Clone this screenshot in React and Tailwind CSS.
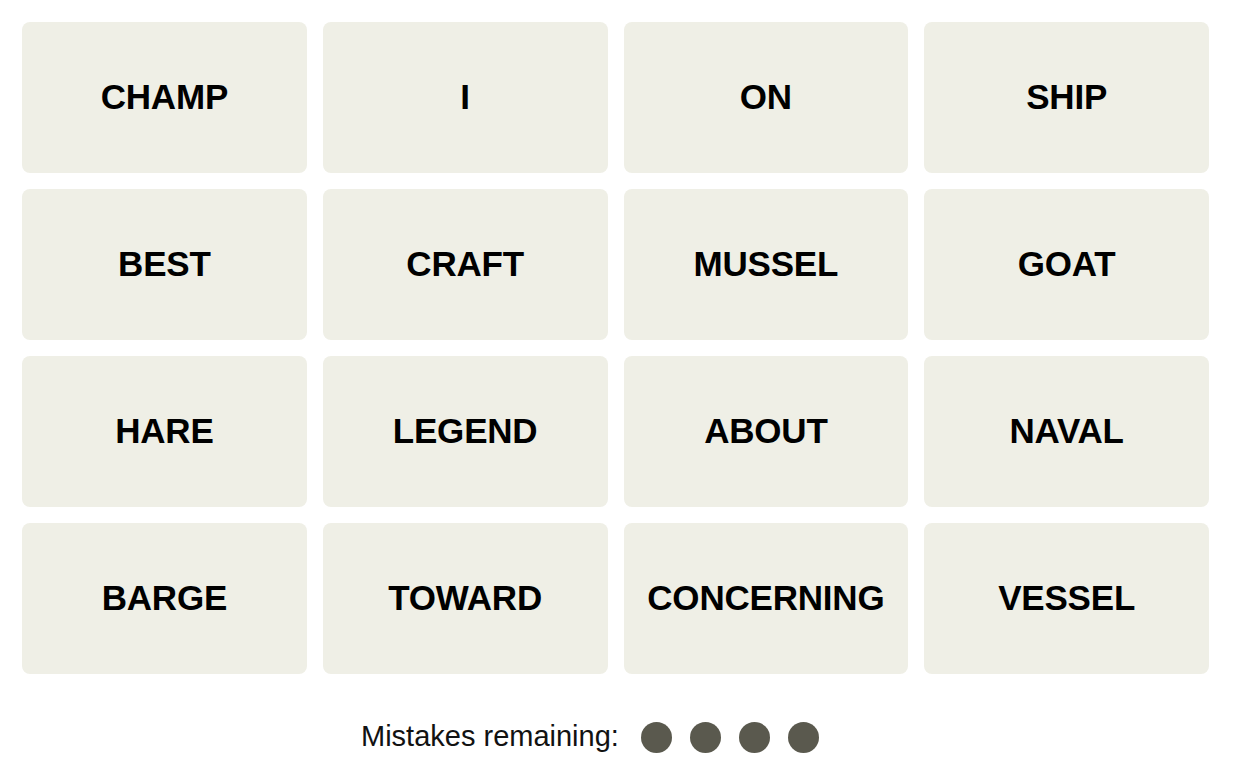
import React from 'react';

const words = [
  'CHAMP', 'I', 'ON', 'SHIP',
  'BEST', 'CRAFT', 'MUSSEL', 'GOAT',
  'HARE', 'LEGEND', 'ABOUT', 'NAVAL',
  'BARGE', 'TOWARD', 'CONCERNING', 'VESSEL',
];

const App = () => {
  return (
    <div className="min-h-screen bg-white pt-[22px] pl-[22px]" style={{ fontFamily: '"Liberation Sans", Arial, sans-serif' }}>
      <div className="w-[1187px]">
        <div className="grid grid-cols-4 gap-x-[16px] gap-y-[16px]">
          {words.map((w) => (
            <button
              key={w}
              className="h-[151px] rounded-[8px] bg-[#efefe6] flex items-center justify-center text-[35px] font-bold text-black tracking-[-0.2px]"
            >
              {w}
            </button>
          ))}
        </div>
        <div className="flex items-center pl-[339px] mt-[47px] h-[32px]">
          <span className="text-[29px] text-[#121212] mr-[22px]">Mistakes remaining:</span>
          <div className="flex gap-[18px]">
            <span className="w-[31px] h-[31px] rounded-full bg-[#5a594e]" />
            <span className="w-[31px] h-[31px] rounded-full bg-[#5a594e]" />
            <span className="w-[31px] h-[31px] rounded-full bg-[#5a594e]" />
            <span className="w-[31px] h-[31px] rounded-full bg-[#5a594e]" />
          </div>
        </div>
      </div>
    </div>
  );
};

export default App;
